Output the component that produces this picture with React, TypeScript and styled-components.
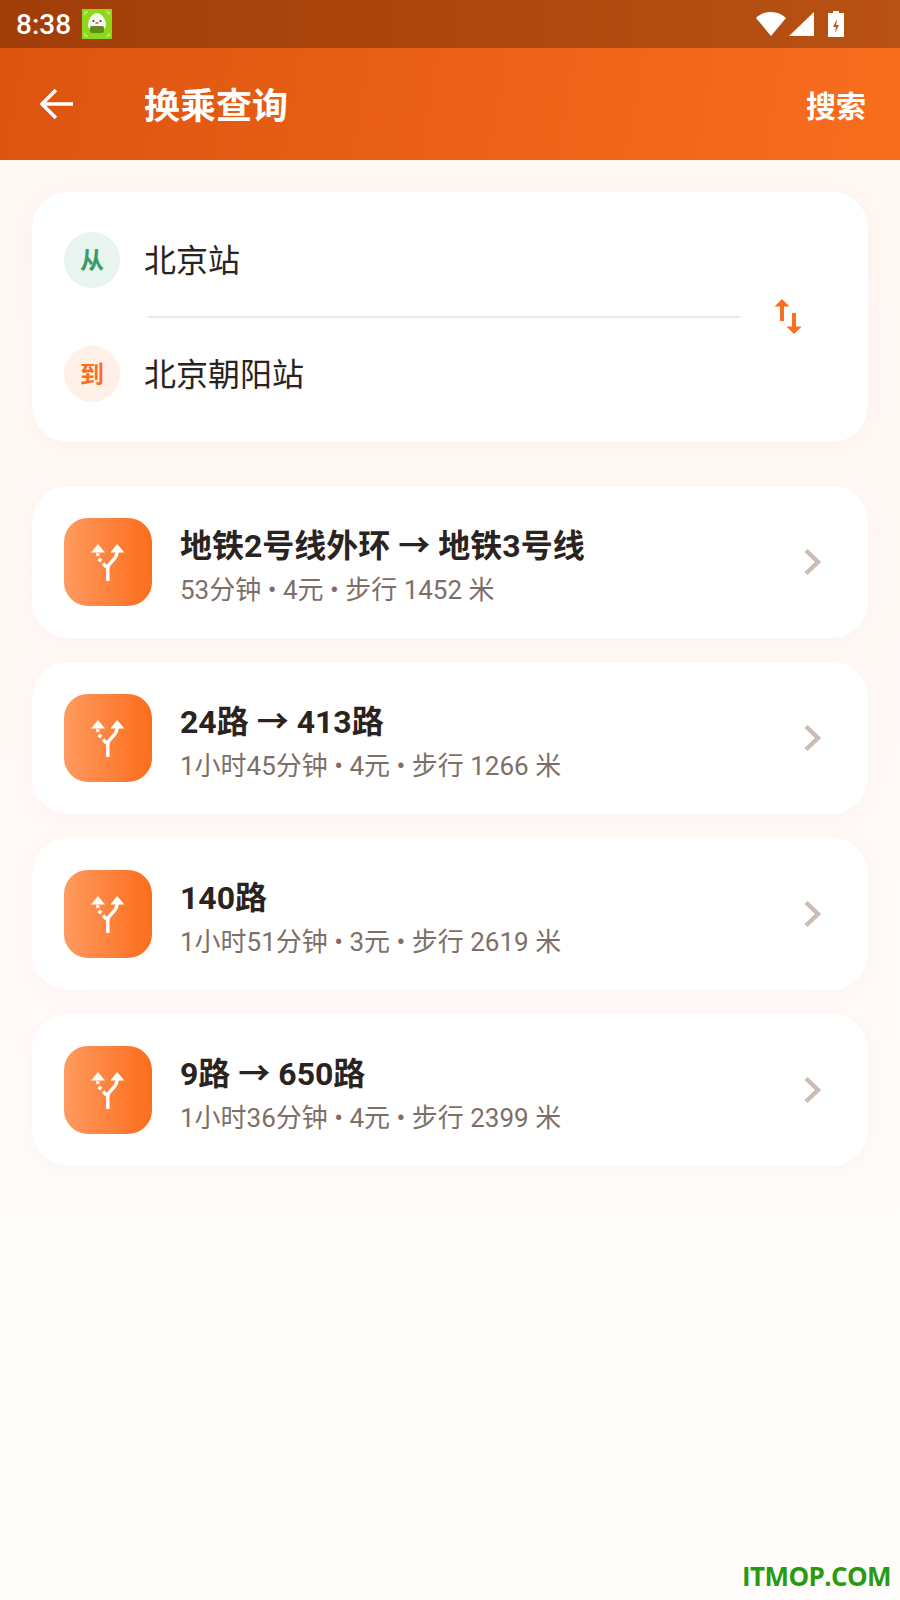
import styled, { createGlobalStyle } from 'styled-components';

const GlobalStyle = createGlobalStyle`
  html, body {
    margin: 0;
    padding: 0;
  }
  body {
    font-family: Roboto, "Noto Sans CJK SC", sans-serif;
  }
`

const Page = styled.div`
  position: relative;
  width: 900px;
  height: 1600px;
  overflow: hidden;
  background: linear-gradient(180deg, #fff7f3 160px, #fffbf9 1100px, #fffefd 100%);
`

const StatusBar = styled.div`
  height: 48px;
  display: flex;
  align-items: center;
  padding: 0 56px 0 16px;
  background: linear-gradient(90deg, #a03d09, #b85113);
  color: #fff;
`

const Time = styled.span`
  font-size: 28px;
  font-weight: 500;
  margin-right: 11px;
`

const StatusIcons = styled.div`
  margin-left: auto;
  display: flex;
  align-items: center;
  gap: 3px;
`

const Header = styled.header`
  height: 112px;
  display: flex;
  align-items: center;
  padding: 0 34px 0 38px;
  background: linear-gradient(100deg, #dc5410, #f96d1e);
  color: #fff;
`

const BackButton = styled.svg`
  width: 36px;
  height: 36px;
  margin-right: 70px;
`

const Title = styled.h1`
  margin: 0 0 2px;
  font-size: 36px;
  font-weight: 700;
`

const SearchLabel = styled.span`
  margin-left: auto;
  font-size: 30px;
  font-weight: 700;
`

const Content = styled.main`
  padding: 32px;
  display: flex;
  flex-direction: column;
`

const SearchCard = styled.section`
  height: 250px;
  box-sizing: border-box;
  padding: 40px 32px;
  display: flex;
  align-items: center;
  background: #fff;
  border-radius: 36px;
  box-shadow: 0 4px 20px rgba(200, 120, 80, 0.05);
  margin-bottom: 44px;
`

const Stops = styled.div`
  flex: 1;
`

const StopRow = styled.div`
  display: flex;
  align-items: center;
  gap: 24px;
  height: 56px;
`

const StopBadge = styled.div<{ $bg: string; $color: string }>`
  width: 56px;
  height: 56px;
  box-sizing: border-box;
  padding-bottom: 3px;
  border-radius: 50%;
  display: flex;
  align-items: center;
  justify-content: center;
  background: ${(p) => p.$bg};
  color: ${(p) => p.$color};
  font-size: 24px;
  font-weight: 700;
`

const StopName = styled.span`
  font-size: 32px;
  color: #2b2320;
  margin-bottom: 4px;
`

const Divider = styled.div`
  height: 2px;
  margin: 28px 0 28px 84px;
  background: #efe7e2;
`

const SwapBox = styled.div`
  width: 96px;
  box-sizing: border-box;
  padding-right: 4px;
  display: flex;
  justify-content: center;
`

const RouteList = styled.div`
  display: flex;
  flex-direction: column;
  gap: 24px;
`

const RouteCard = styled.article`
  height: 152px;
  box-sizing: border-box;
  padding: 0 32px;
  display: flex;
  align-items: center;
  background: #fff;
  border-radius: 36px;
  box-shadow: 0 4px 20px rgba(200, 120, 80, 0.05);
`

const RouteIcon = styled.div`
  width: 88px;
  height: 88px;
  flex: none;
  border-radius: 24px;
  display: flex;
  align-items: center;
  justify-content: center;
  background: linear-gradient(90deg, #ff9a5e, #fb6e1c);
  margin-right: 28px;
`

const RouteText = styled.div`
  flex: 1;
  padding-top: 7px;
`

const RouteTitle = styled.div`
  font-size: 32px;
  line-height: 48px;
  font-weight: 700;
  color: #2b2320;
`

const RouteMeta = styled.div`
  font-size: 26px;
  line-height: 40px;
  color: #7d6f68;
`

const Chevron = styled.svg`
  width: 26px;
  height: 30px;
  margin-right: 11px;
`

const Watermark = styled.div`
  position: absolute;
  right: 9px;
  bottom: 6px;
  font-family: "Open Sans", sans-serif;
  font-size: 26px;
  font-weight: 700;
  letter-spacing: -0.6px;
  color: #2a9a10;
`

const routes = [
  { title: '地铁2号线外环 → 地铁3号线', meta: '53分钟 • 4元 • 步行 1452 米' },
  { title: '24路 → 413路', meta: '1小时45分钟 • 4元 • 步行 1266 米' },
  { title: '140路', meta: '1小时51分钟 • 3元 • 步行 2619 米' },
  { title: '9路 → 650路', meta: '1小时36分钟 • 4元 • 步行 2399 米' },
];

const App = () => {
  return (
    <Page>
      <GlobalStyle />
      <StatusBar>
        <Time>8:38</Time>
        <svg width="30" height="30" viewBox="0 0 30 30">
          <rect width="30" height="30" fill="#8ed81a" />
          <path d="M15 4c5 0 9 7 9 12 0 4-4 6-9 6s-9-2-9-6c0-5 4-12 9-12z" fill="#f6f8ee" />
          <rect x="8" y="17" width="14" height="7" rx="2" fill="#5f8a1c" />
          <circle cx="11.500" cy="12" r="1" fill="#333" />
          <circle cx="18.500" cy="12" r="1" fill="#333" />
          <ellipse cx="15" cy="14" rx="1.800" ry="1" fill="#e8656a" />
          <path d="M3 6V3h3M24 3h3v3M3 24v3h3M27 24v3h-3" stroke="#d8f5a8" strokeWidth="1" fill="none" />
        </svg>
        <StatusIcons>
          <svg width="30" height="26" viewBox="0 0 30 26">
            <path d="M0 7C4 3 9 1 15 1s11 2 15 6L15 25z" fill="#fff" />
          </svg>
          <svg width="25" height="26" viewBox="0 0 25 26">
            <path d="M25 1v24H0z" fill="#fff" />
          </svg>
          <svg width="16" height="26" viewBox="0 0 16 26" style={{ marginLeft: 11 }}>
            <path d="M5 0h6v2h5v24H0V2h5z" fill="#fff" />
            <path d="M9 8l-4 8h3l-1 6 4-8H8z" fill="#b85113" />
          </svg>
        </StatusIcons>
      </StatusBar>
      <Header>
        <BackButton viewBox="0 0 36 36">
          <path d="M35 18H4M18 4L4 18l14 14" stroke="#fff" strokeWidth="3.600" fill="none" />
        </BackButton>
        <Title>换乘查询</Title>
        <SearchLabel>搜索</SearchLabel>
      </Header>
      <Content>
        <SearchCard>
          <Stops>
            <StopRow>
              <StopBadge $bg="#e8f5ee" $color="#3a9a6c">从</StopBadge>
              <StopName>北京站</StopName>
            </StopRow>
            <Divider />
            <StopRow>
              <StopBadge $bg="#fff0e8" $color="#fb6e1c">到</StopBadge>
              <StopName>北京朝阳站</StopName>
            </StopRow>
          </Stops>
          <SwapBox>
            <svg width="32" height="36" viewBox="0 0 32 36">
              <path d="M12 0l7.500 7.500H14V22h-4V7.500H4.500z" fill="#fb6e1c" />
              <path d="M22 14h4v13.500h5.700L24 35l-7.700-7.500H22z" fill="#fb6e1c" />
            </svg>
          </SwapBox>
        </SearchCard>
        <RouteList>
          {routes.map((route) => (
            <RouteCard key={route.title}>
              <RouteIcon>
                <svg width="40" height="42" viewBox="0 0 40 42">
                  <path d="M29.200 3l7 8.500H22.400zM10 3l7 8.500H3z" fill="#fff" />
                  <path d="M19.800 40V27c0-6 9.400-7 9.400-17" stroke="#fff" strokeWidth="3.400" fill="none" />
                  <path d="M9.800 12v3M10.500 18l3 2M15 22.500l3.500 3.500" stroke="#fff" strokeWidth="3.400" fill="none" />
                </svg>
              </RouteIcon>
              <RouteText>
                <RouteTitle>{route.title}</RouteTitle>
                <RouteMeta>{route.meta}</RouteMeta>
              </RouteText>
              <Chevron viewBox="0 0 26 30">
                <path d="M7 3.500l12 11.500L7 26.500" stroke="#cbbdb5" strokeWidth="4.500" fill="none" />
              </Chevron>
            </RouteCard>
          ))}
        </RouteList>
      </Content>
      <Watermark>ITMOP.COM</Watermark>
    </Page>
  );
};

export default App;
